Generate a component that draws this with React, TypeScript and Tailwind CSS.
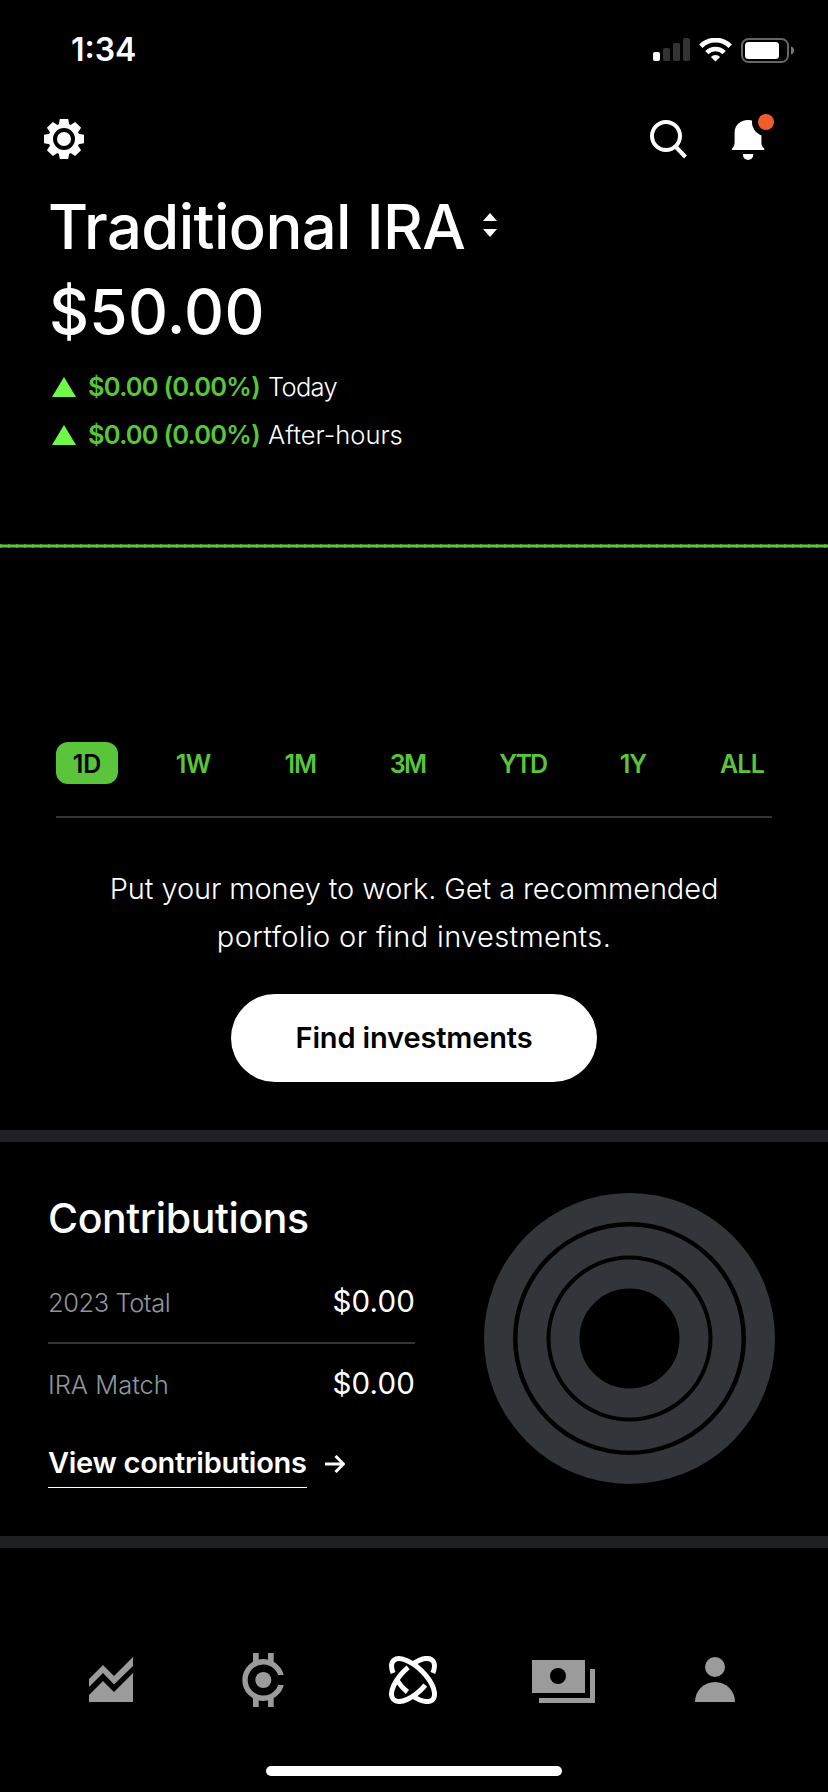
import type { ReactNode } from "react";

const RANGES = [
  { label: "1D", tracking: "tracking-normal" },
  { label: "1W", tracking: "tracking-[-0.6px]" },
  { label: "1M", tracking: "tracking-[-1px]" },
  { label: "3M", tracking: "tracking-[-1.6px]" },
  { label: "YTD", tracking: "tracking-[-2px]" },
  { label: "1Y", tracking: "tracking-[-1px]" },
  { label: "ALL", tracking: "tracking-[-0.8px]" },
];

export default function App() {
  return (
    <div className="flex h-[1792px] w-[828px] flex-col overflow-hidden bg-black font-['Inter',sans-serif] text-white">
      <StatusBar />
      <Toolbar />
      <Balance />
      <FlatChart />
      <RangeTabs />
      <FindInvestments />
      <div className="h-3 shrink-0 bg-[#1e2024]" />
      <Contributions />
      <div className="h-3 shrink-0 bg-[#1e2024]" />
      <BottomNav />
    </div>
  );
}

function StatusBar() {
  return (
    <div className="flex h-[100px] shrink-0 items-center justify-between pl-[71px] pr-[34px]">
      <div className="text-[32px] font-semibold leading-[100px]">1:34</div>
      <div className="flex items-center">
        <svg width="37" height="24" viewBox="0 0 37 24">
          <rect x="0" y="14" width="7" height="9" rx="2" fill="#fff" />
          <rect x="10" y="10" width="7" height="13" rx="2" fill="#333" />
          <rect x="20" y="5" width="7" height="18" rx="2" fill="#333" />
          <rect x="30" y="0" width="7" height="23" rx="2" fill="#333" />
        </svg>
        <svg className="ml-[9px]" width="33" height="24" viewBox="0 0 33 24" fill="none" stroke="#fff">
          <path d="M1.8 8.2a20.8 20.8 0 0 1 29.4 0" strokeWidth="4.8" />
          <path d="M7.8 14.6a12.3 12.3 0 0 1 17.4 0" strokeWidth="4.6" />
          <path d="M16.5 23.6l-4.6-4.6a6.5 6.5 0 0 1 9.2 0z" fill="#fff" stroke="none" />
        </svg>
        <svg className="ml-[9px]" width="53" height="25" viewBox="0 0 53 25">
          <rect x="1" y="1" width="46" height="23" rx="6.5" fill="none" stroke="#666" strokeWidth="2" />
          <rect x="4" y="4" width="34" height="17" rx="3.5" fill="#fff" />
          <path d="M50 8.5c2 .6 3 2.200 3 4s-1 3.400-3 4z" fill="#7a7a7a" />
        </svg>
      </div>
    </div>
  );
}

function Toolbar() {
  return (
    <div className="flex h-[78px] shrink-0 items-center pl-11 pr-[54px]">
      <svg width="40" height="40" viewBox="-20 -20 40 40" fill="#fff">
        <circle r="15.600" />
        {[0, 45, 90, 135].map((deg) => (
          <path
            key={deg}
            d="M-4.200-20H4.200L5.300-14V14L4.200 20H-4.200L-5.300 14V-14z"
            transform={`rotate(${deg})`}
          />
        ))}
        <circle r="9" fill="none" stroke="#000" strokeWidth="4" />
      </svg>
      <div className="flex-1" />
      <svg width="38" height="40" viewBox="0 0 38 40" fill="none" stroke="#fff" strokeWidth="4">
        <circle cx="16" cy="17" r="14" />
        <path d="M25.500 27.500L35.500 38" />
      </svg>
      <svg className="ml-11" width="42" height="50" viewBox="0 0 42 50">
        <path
          d="M0 36v-1.500c1.800-1.500 2.600-3 2.600-7V18.500C2.600 11 8.500 6 16 6s13.400 5 13.400 12.500v9c0 4 .8 5.500 2.800 7V36z"
          fill="#fff"
        />
        <path d="M11 40h10.200v1a5.100 5.100 0 0 1-10.200 0z" fill="#fff" />
        <circle cx="34" cy="8" r="14" fill="#000" />
        <circle cx="34" cy="8" r="8" fill="#f15d2a" />
      </svg>
    </div>
  );
}

function Balance() {
  return (
    <div className="shrink-0 pl-12">
      <div className="flex items-center">
        <h1 className="w-[419px] whitespace-nowrap text-[61.500px] font-medium leading-[98px] tracking-[-0.6px]">
          Traditional IRA
        </h1>
        <svg className="-mt-1 ml-4" width="14" height="24" viewBox="0 0 14 24" fill="#fff">
          <path d="M7 0l7 8H0zM7 24l7-8H0z" />
        </svg>
      </div>
      <div className="pl-px text-[62px] font-medium leading-[71px] tracking-[0.300px]">$50.00</div>
      <div className="mt-4">
        <Change label="Today" tracking="tracking-[-0.7px]" />
        <Change label="After-hours" tracking="tracking-normal" />
      </div>
    </div>
  );
}

function Change({ label, tracking }: { label: string; tracking: string }) {
  return (
    <div className="flex h-12 items-center text-[25.500px] leading-[48px]">
      <svg className="ml-1" width="24" height="20" viewBox="0 0 24 20" fill="#71f849">
        <path d="M12 0l12 20H0z" />
      </svg>
      <span className="ml-3 w-[180px] whitespace-nowrap font-semibold tracking-[-0.78px] text-[#5ac53b]">
        $0.00 (0.00%)
      </span>
      <span className={`font-light ${tracking}`}>{label}</span>
    </div>
  );
}

function FlatChart() {
  return (
    <svg className="h-[283px] w-full shrink-0" viewBox="0 0 828 283">
      <path d="M0 87H828" stroke="#2f671f" strokeWidth="4" />
      <path d="M0 87H828" stroke="#4b9c35" strokeWidth="4" strokeDasharray="2 6" />
      <path d="M0 87H828" stroke="#5ac53b" strokeWidth="2" />
    </svg>
  );
}

function RangeTabs() {
  return (
    <div className="shrink-0 px-14">
      <div className="-mr-2 flex justify-between">
        {RANGES.map((r, i) => (
          <button
            key={r.label}
            className={`h-[42px] rounded-xl text-[25px] font-semibold leading-[44px] ${r.tracking} ${
              i === 0 ? "w-[62px] bg-[#5ac53b] text-black" : "px-4 text-[#5ac53b]"
            }`}
          >
            {r.label}
          </button>
        ))}
      </div>
      <div className="mt-8 h-0.5 bg-[#2f3438]" />
    </div>
  );
}

function FindInvestments() {
  return (
    <div className="flex shrink-0 flex-col items-center pb-12 pt-[47px]">
      <p className="text-center text-[29px] font-light leading-[48px]">
        <span className="tracking-[-0.1px]">Put your money to work. Get a recommended</span>
        <br />
        <span className="tracking-[0.34px]">portfolio or find investments.</span>
      </p>
      <button className="mt-[33px] h-[88px] w-[366px] rounded-full bg-white text-[29px] font-semibold leading-[88px] tracking-[-0.15px] text-black">
        Find investments
      </button>
    </div>
  );
}

function Contributions() {
  return (
    <div className="flex h-[394px] shrink-0 pl-12">
      <div className="w-[367px]">
        <h2 className="mt-[46px] text-[41px] font-medium leading-[60px] tracking-[-0.4px]">Contributions</h2>
        <div className="mt-[14px] border-b-2 border-[#2f3438]">
          <Row label="2023 Total" tracking="tracking-[-0.45px]" />
        </div>
        <Row label="IRA Match" tracking="tracking-normal" />
        <div className="mt-4 flex items-center">
          <a className="h-[48px] border-b border-white text-[29px] font-semibold leading-[46px] tracking-[-0.3px]">
            View contributions
          </a>
          <svg className="ml-[18px]" width="20" height="18" viewBox="0 0 20 18" fill="none" stroke="#fff" strokeWidth="3">
            <path d="M0 9H18.500M10.500 1l8 8-8 8" />
          </svg>
        </div>
      </div>
      <svg className="ml-[68px] mt-[50px]" width="293" height="293" viewBox="-146.500 -146.500 293 293" fill="none" stroke="#323539">
        <circle r="131" strokeWidth="29" />
        <circle r="97.500" strokeWidth="29" />
        <circle r="64.500" strokeWidth="29" />
      </svg>
    </div>
  );
}

function Row({ label, tracking }: { label: string; tracking: string }) {
  return (
    <div className="flex h-20 items-baseline justify-between leading-[78px]">
      <span className={`text-[25.500px] font-light text-[#8c979d] ${tracking}`}>{label}</span>
      <span className="text-[29.500px] tracking-[0.15px]">$0.00</span>
    </div>
  );
}

function BottomNav() {
  return (
    <div className="flex h-[244px] shrink-0 flex-col items-center">
      <div className="grid h-[218px] w-full grid-cols-5 pl-9 pr-[37px] pt-[47px]">
        <NavItem>
          <svg width="45" height="46" viewBox="0 0 45 46" fill="#9b9b9b">
            <path d="M0 22L14 8l11 11L44 0v9L25 27.500 14 16 0 30z" />
            <path d="M0 38l14-14 11 11L44 16v29H0z" />
          </svg>
        </NavItem>
        <NavItem>
          <svg width="43" height="54" viewBox="0 0 43 54" fill="#9b9b9b">
            <path d="M12 0h5.700v9H12zM27 0h5.700v9H27zM12 45h5.700v9H12zM27 45h5.700v9H27z" />
            <circle cx="22.300" cy="27" r="18.300" fill="none" stroke="#9b9b9b" strokeWidth="5.400" />
            <path d="M32 22h11v10H32z" fill="#000" />
            <circle cx="22.300" cy="27" r="8" />
          </svg>
        </NavItem>
        <NavItem>
          <svg width="49" height="48" viewBox="-24 -24 49 48" fill="none" stroke="#fff" strokeWidth="5">
            <g transform="rotate(45)">
              <path d="M-19 9.100A27.600 12.600 0 1 1 11.500 11.500" />
              <path d="M4.500 12.450A27.600 12.600 0 0 1-11.500 11.500" />
            </g>
            <g transform="rotate(-45)">
              <path d="M19 9.100A27.600 12.600 0 0 0 11.500-11.500" />
              <path d="M5.500-12.350A27.600 12.600 0 1 0 5 12.400" />
            </g>
          </svg>
        </NavItem>
        <NavItem>
          <svg width="65" height="46" viewBox="0 -3 65 46">
            <path d="M0 0h53v33H0z" fill="#9b9b9b" />
            <circle cx="26" cy="16" r="8" fill="#000" />
            <path d="M58 9h5v34H7v-5h51z" fill="#9b9b9b" />
          </svg>
        </NavItem>
        <NavItem>
          <svg width="41" height="46" viewBox="0 0 41 46" fill="#9b9b9b">
            <circle cx="20" cy="10" r="10" />
            <path d="M0 45a20 20 0 0 1 40 0z" />
          </svg>
        </NavItem>
      </div>
      <div className="h-[10px] w-[296px] rounded-full bg-white" />
    </div>
  );
}

function NavItem({ children }: { children: ReactNode }) {
  return <button className="flex h-[170px] items-center justify-center">{children}</button>;
}
